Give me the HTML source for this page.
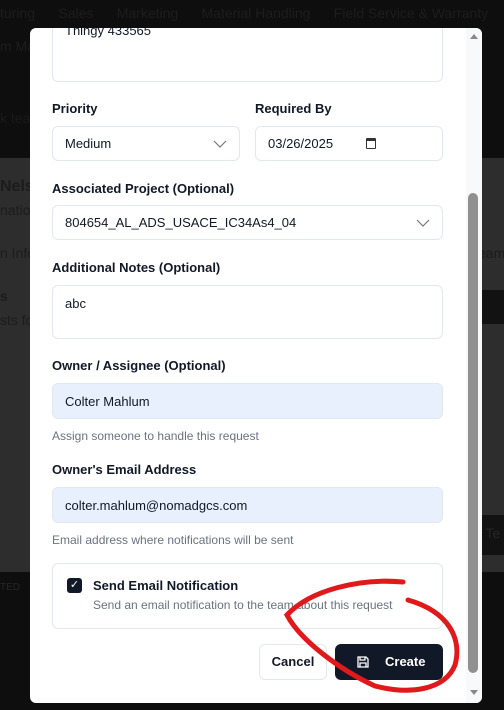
<!DOCTYPE html>
<html><head><style>
*{box-sizing:border-box;margin:0;padding:0}
body{width:504px;height:710px;overflow:hidden;background:#0e0e0e;font-family:"Liberation Sans",sans-serif;position:relative}
.bgt{position:absolute;color:#1d1d1d;font-size:14px}
.modal{position:absolute;left:30px;top:28px;width:452px;height:675px;background:#fff;border-radius:6px;overflow:hidden}
.lbl{position:absolute;left:22px;font-size:13px;font-weight:bold;color:#111827}
.fld{position:absolute;border:1px solid #e2e8f0;border-radius:6px;font-size:13px;color:#111827;padding-left:12px;display:flex;align-items:center;background:#fff}
.blue{background:#e8f0fe}
.help{position:absolute;left:22px;font-size:12px;color:#6b7280}
.chev{position:absolute;right:12px;top:12px}
</style></head><body>
<div style="position:absolute;left:0;top:158px;width:504px;height:414px;background:#2d2d2d"></div>
<div style="position:absolute;left:440px;top:290px;width:64px;height:34px;background:#121212"></div>
<div style="position:absolute;left:440px;top:515px;width:64px;height:40px;background:#121212"></div>
<div class="bgt" style="left:0;top:5px;width:504px;white-space:nowrap">turing &nbsp;&nbsp;&nbsp;&nbsp;&nbsp;Sales &nbsp;&nbsp;&nbsp;&nbsp;&nbsp;Marketing &nbsp;&nbsp;&nbsp;&nbsp;&nbsp;Material Handling &nbsp;&nbsp;&nbsp;&nbsp;&nbsp;Field Service &amp; Warranty</div>
<div class="bgt" style="left:0;top:38px">m Ma</div>
<div class="bgt" style="left:0;top:110px;color:#1a1a1a">k tea</div>
<div class="bgt" style="left:0;top:178px;font-size:16px;color:#1c1c1c;font-weight:bold">Nelso</div>
<div class="bgt" style="left:0;top:202px;color:#1c1c1c">nation</div>
<div class="bgt" style="left:0;top:245px;color:#1c1c1c">n Info</div>
<div class="bgt" style="left:0;top:288px;color:#1c1c1c;font-weight:bold">s</div>
<div class="bgt" style="left:0;top:312px;color:#1c1c1c">sts for</div>
<div class="bgt" style="left:0;top:582px;font-size:10px;color:#262626">TED</div>
<div class="bgt" style="left:478px;top:245px;color:#1c1c1c">eam</div>
<div class="bgt" style="left:474px;top:525px;color:#262626">e Te</div>
<div class="modal">
 <div class="fld" style="left:22px;top:-10px;width:391px;height:64px;align-items:flex-start;padding-top:4px">Thingy 433565</div>
 <div class="lbl" style="top:73px">Priority</div>
 <div class="lbl" style="left:225px;top:73px">Required By</div>
 <div class="fld" style="left:22px;top:98px;width:188px;height:35px">Medium<svg class="chev" width="14" height="10" viewBox="0 0 14 10" fill="none" stroke="#777" stroke-width="1.2"><path d="M1 2l6 6 6-6"/></svg></div>
 <div class="fld" style="left:225px;top:98px;width:188px;height:35px">03/26/2025<span style="position:absolute;right:66px;top:11px;width:10px;height:11px;border:1.5px solid #333;border-top-width:3px;border-radius:1px"></span></div>
 <div class="lbl" style="top:153px">Associated Project (Optional)</div>
 <div class="fld" style="left:22px;top:177px;width:391px;height:35px">804654_AL_ADS_USACE_IC34As4_04<svg class="chev" width="14" height="10" viewBox="0 0 14 10" fill="none" stroke="#777" stroke-width="1.2"><path d="M1 2l6 6 6-6"/></svg></div>
 <div class="lbl" style="top:232px">Additional Notes (Optional)</div>
 <div class="fld" style="left:22px;top:257px;width:391px;height:54px;align-items:flex-start;padding-top:10px">abc</div>
 <div class="lbl" style="top:330px">Owner / Assignee (Optional)</div>
 <div class="fld blue" style="left:22px;top:355px;width:391px;height:36px">Colter Mahlum</div>
 <div class="help" style="top:401px">Assign someone to handle this request</div>
 <div class="lbl" style="top:434px">Owner's Email Address</div>
 <div class="fld blue" style="left:22px;top:459px;width:391px;height:36px">colter.mahlum@nomadgcs.com</div>
 <div class="help" style="top:505px">Email address where notifications will be sent</div>
 <div style="position:absolute;left:22px;top:535px;width:391px;height:66px;border:1px solid #e2e8f0;border-radius:6px">
  <div style="position:absolute;left:14px;top:14px;width:15px;height:15px;background:#111827;border-radius:3px;color:#fff;font-size:11px;text-align:center;line-height:15px">&#10003;</div>
  <div style="position:absolute;left:40px;top:14px;font-size:13px;font-weight:bold;color:#111827">Send Email Notification</div>
  <div style="position:absolute;left:40px;top:34px;font-size:12px;color:#6b7280;white-space:nowrap">Send an email notification to the team about this request</div>
 </div>
 <div style="position:absolute;left:229px;top:616px;width:68px;height:36px;border:1px solid #e2e8f0;border-radius:6px;font-size:13px;font-weight:bold;color:#111827;text-align:center;line-height:34px">Cancel</div>
 <div style="position:absolute;left:305px;top:616px;width:108px;height:36px;background:#111827;border-radius:6px;font-size:13px;font-weight:bold;color:#fff;line-height:36px;padding-left:50px">Create
  <svg style="position:absolute;left:22px;top:12px" width="12" height="12" viewBox="0 0 12 12" fill="none" stroke="#fff" stroke-width="1.3"><path d="M1 1h8l2 2v8H1z M3 1v3h5V1 M3 11V7h6v4"/></svg></div>
 <div style="position:absolute;left:436px;top:0;width:16px;height:675px;background:#f8f9fa"></div>
 <div style="position:absolute;left:438px;top:165px;width:10px;height:480px;background:#909090;border-radius:5px"></div>
 <div style="position:absolute;left:440px;top:6px;width:0;height:0;border-left:4px solid transparent;border-right:4px solid transparent;border-bottom:5px solid #888"></div>
 <div style="position:absolute;left:440px;top:662px;width:0;height:0;border-left:4px solid transparent;border-right:4px solid transparent;border-top:5px solid #888"></div>
</div>
<svg style="position:absolute;left:0;top:0" width="504" height="710" fill="none" stroke="#e0191b" stroke-width="5" stroke-linecap="round">
<path d="M403 582 C360 578 310 590 287 615 C300 640 340 670 375 686 C410 695 445 690 455 665 C462 640 450 612 408 600"/>
</svg>
</body></html>
